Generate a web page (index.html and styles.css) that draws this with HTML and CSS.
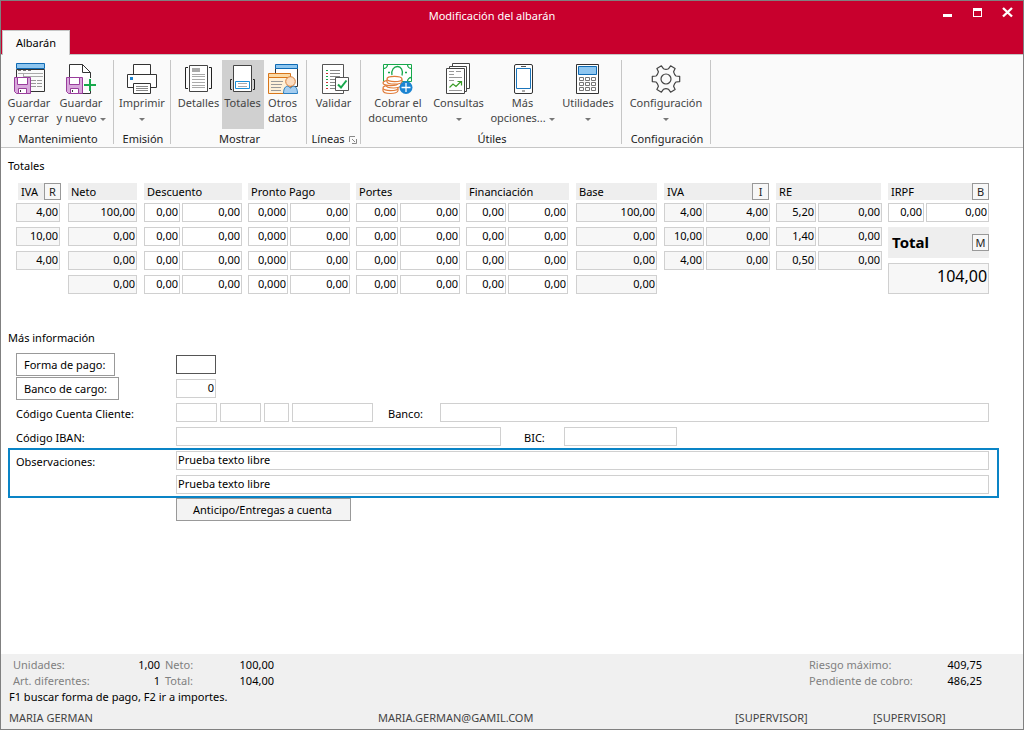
FILE: index.html
```html
<!DOCTYPE html>
<html lang="es">
<head>
<meta charset="utf-8">
<title>Modificación del albarán</title>
<link rel="stylesheet" href="styles.css">
</head>
<body>
<div class="window">
  <header class="top">
    <div class="titlebar">
      <h1 class="title">Modificación del albarán</h1>
      <div class="controls">
        <button class="control" aria-label="Minimizar"><svg width="12" height="12" viewBox="0 0 12 12"><rect x="1" y="7" width="9" height="3" fill="#fff"/></svg></button>
        <button class="control" aria-label="Maximizar"><svg width="12" height="12" viewBox="0 0 12 12"><path d="M1 1h9v9H1zM2 4v5h7V4z" fill="#fff" fill-rule="evenodd"/></svg></button>
        <button class="control" aria-label="Cerrar"><svg width="12" height="12" viewBox="0 0 12 12"><path d="M1 1L10 9.500M10 1L1 9.500" stroke="#fff" stroke-width="2.400"/></svg></button>
      </div>
    </div>
    <nav class="tabs"><button class="tab">Albarán</button></nav>
  </header>

  <div class="ribbon">
    <section class="group g-mant">
      <div class="tools">
        <button class="tool w-50">
          <svg class="icon" viewBox="0 0 34 34">
            <path d="M4.500 7.500H32.500V29.500H4.500z" fill="#fafafa" stroke="#333"/>
            <path d="M4.500 1.500H32.500V6.500H4.500z" fill="#8ec6f0" stroke="#0f6ab4"/>
            <path d="M6 8.500h3m2 0h3m2 0h3" stroke="#777"/><path d="M6 11.500h25M11.500 11v4M11 14.500h20" stroke="#aaa"/>
            <path d="M19 18.500h12M19 21.500h12M19 24.500h12" stroke="#999" stroke-dasharray="5 1"/>
            <g id="floppy"><path d="M2.500 15.500H18.500V31.500H4.500L2.500 29.500z" fill="#d9a9dc" stroke="#993d9c"/><path d="M5.500 15.500H15.500V22.500H5.500z" fill="#fff" stroke="#993d9c"/><path d="M6.500 26.500H14.500V31.500H6.500z" fill="#fff" stroke="#993d9c"/><path d="M8.500 28v2" stroke="#333"/></g>
          </svg>
          <span>Guardar</span><span>y cerrar</span>
        </button>
        <button class="tool w-54">
          <svg class="icon" viewBox="0 0 34 34">
            <path d="M5.500 2.500H18.500L26.500 10.500V31.500H5.500z" fill="#fff" stroke="#333"/>
            <path d="M18.500 2.500V10.500H26.500" fill="none" stroke="#333"/>
            <path d="M20 16h14v12H20z" fill="#fafafa"/>
            <use href="#floppy"/>
            <path d="M26 17v12M20 23h12" stroke="#17a84b" stroke-width="2"/>
          </svg>
          <span>Guardar</span><span>y nuevo <i class="arrow"></i></span>
        </button>
      </div>
      <h2 class="caption">Mantenimiento</h2>
    </section>

    <section class="group g-emi">
      <div class="tools">
        <button class="tool w-50">
          <svg class="icon" viewBox="0 0 34 34">
            <g fill="#fff" stroke="#333"><path d="M8.500 2.500h17v10h-17z"/><path d="M2.500 12.500h29v13h-29z"/><path d="M8.500 21.500h17v10h-17z"/></g>
            <path d="M5 15h3v3H5z" fill="#1b84d2"/><path d="M11 24.500h12M11 26.500h12M11 28.500h12" stroke="#888"/>
          </svg>
          <span>Imprimir</span><span><i class="arrow"></i></span>
        </button>
      </div>
      <h2 class="caption">Emisión</h2>
    </section>

    <section class="group g-mos">
      <div class="tools">
        <button class="tool w-46">
          <svg class="icon" viewBox="0 0 34 34">
            <path d="M7.500 3.500h18v26h-18z" fill="#fff" stroke="#444"/>
            <path d="M6 5.500H3.500v21H6M27 5.500h2.500v21H27" fill="none" stroke="#222"/>
            <path d="M10 6h8v4h-8z" fill="#aaa"/><path d="M10 12.500h13M10 14.500h13M10 17.500h13M10 20.500h13M10 23.500h13M10 25.500h13" stroke="#aaa"/>
          </svg>
          <span>Detalles</span>
        </button>
        <button class="tool w-42 active" aria-pressed="true">
          <svg class="icon" viewBox="0 0 34 34">
            <path d="M7.500 3.500h18v26h-18z" fill="#fff" stroke="#444"/>
            <path d="M6 17.500H4.500v10H6M27 17.500h1.500v10H27" fill="none" stroke="#222"/>
            <path d="M9.500 19.500h14v7h-14z" fill="#fff" stroke="#1b8fd8"/><path d="M12 21.500h9M12 24.500h9" stroke="#aaa"/>
          </svg>
          <span>Totales</span>
        </button>
        <button class="tool w-38">
          <svg class="icon" viewBox="0 0 34 34">
            <path d="M9.500 6.500h22v18h-22z" fill="#fff" stroke="#333"/><path d="M9.500 2.500h22v4h-22z" fill="#8ec6f0" stroke="#0f6ab4"/>
            <path d="M2.500 15.500h22v16h-22z" fill="#fef0d8" stroke="#d8761a"/><path d="M2.500 11.500h22v4h-22z" fill="#fbd9a5" stroke="#d8761a"/>
            <path d="M5 19.500h12M5 22.500h11M5 25.500h10M5 28.500h10" stroke="#999"/>
            <path d="M17.500 31.500c0-5 2-7.500 4.500-7.500l2.500 2 2.500-2c3 0 4.500 3 4.500 7.500z" fill="#a4cdf0" stroke="#2b7fc0"/>
            <circle cx="24.500" cy="19.500" r="4.800" fill="#fbdcc0" stroke="#d8803c"/>
          </svg>
          <span>Otros</span><span>datos</span>
        </button>
      </div>
      <h2 class="caption">Mostrar</h2>
    </section>

    <section class="group g-lin">
      <div class="tools">
        <button class="tool w-50">
          <svg class="icon" viewBox="0 0 34 34">
            <path d="M5.500 2.500h21v29h-21z" fill="#fff" stroke="#555"/>
            <path d="M13 8.500h10M13 11.500h10M13 14.500h10M13 17.500h6M13 20.500h6M13 23.500h6M13 26.500h6" stroke="#888"/>
            <path d="M9 8.500h2M9 14.500h2M9 17.500h2M9 23.500h2" stroke="#17a84b"/><path d="M9 11.500h2M9 20.500h2M9 26.500h2" stroke="#c33"/>
            <path d="M18.500 15.500h13v13h-13z" fill="#fff" stroke="#555"/><path d="M21 22.500l3 3 5.500-7" fill="none" stroke="#17a84b" stroke-width="2"/>
          </svg>
          <span>Validar</span>
        </button>
      </div>
      <h2 class="caption">Líneas <svg class="launcher" viewBox="0 0 8 8"><path d="M.5 6V.5H6M3 3l3 3M7.500 3v4.500H3" fill="none" stroke="#888"/></svg></h2>
    </section>

    <section class="group g-uti">
      <div class="tools">
        <button class="tool w-64">
          <svg class="icon" viewBox="0 0 34 34">
            <path d="M2.500 2.500h28v17h-28z" fill="#fff" stroke="#17a84b"/>
            <path d="M2.500 6.500a4 4 0 0 0 4-4M26.500 2.500a4 4 0 0 0 4 4M26.500 19.500a4 4 0 0 1 4-4M11 13c-1-5 2-8.500 5.500-8.500s6 4 4.500 9M7 10.500h2M24 10.500h2" fill="none" stroke="#17a84b" stroke-width="1.300"/>
            <g fill="#fff" stroke="#e07b39" stroke-width="1.200"><path d="M2 26.500v2c0 4 15 4 15 0v-2"/><ellipse cx="9.500" cy="26" rx="7.500" ry="2.700"/><path d="M5 21v2c0 4 15 4 15 0v-2"/><ellipse cx="9.500" cy="21" rx="7.500" ry="2.700"/><path d="M6 17.500v2c0 3.500 15 3.500 15 0v-2"/><ellipse cx="13.500" cy="17" rx="7.500" ry="2.700"/></g>
            <circle cx="25" cy="25.500" r="6.500" fill="#1b84d2"/><path d="M25 21v9M20.500 25.500h9" stroke="#fff" stroke-width="1.300"/>
          </svg>
          <span>Cobrar el</span><span>documento</span>
        </button>
        <button class="tool w-57">
          <svg class="icon" viewBox="0 0 34 34">
            <g fill="#fff" stroke="#444"><path d="M10.500 1.500h17v25h-17z"/><path d="M7.500 4.500h17v25h-17z"/><path d="M4.500 6.500h18v25h-18z"/></g>
            <path d="M7 9.500h5m2 0h5M7 12.500h5M7 15.500h13M7 18.500h5M7 28.500h13" stroke="#999"/>
            <path d="M7.500 25.500l3.500-3.500 3 2.500 5-5M15.500 19.500h4v4" fill="none" stroke="#3a9c28" stroke-width="1.200"/>
          </svg>
          <span>Consultas</span><span><i class="arrow"></i></span>
        </button>
        <button class="tool w-71">
          <svg class="icon" viewBox="0 0 34 34">
            <rect x="8.500" y="2.500" width="18" height="29" rx="1.500" fill="#fff" stroke="#333"/><path d="M10.500 6.500h14v20h-14z" fill="#fff" stroke="#1b75bb"/><path d="M15 4.500h5M16 29h3" stroke="#555"/>
          </svg>
          <span>Más</span><span>opciones... <i class="arrow"></i></span>
        </button>
        <button class="tool w-60">
          <svg class="icon" viewBox="0 0 34 34">
            <path d="M5.500 2.500h22v29h-22z" fill="#fff" stroke="#333"/><path d="M7.500 4.500h18v8h-18z" fill="#8ec6f0" stroke="#0f6ab4"/>
            <path d="M8.500 15.500h4v3h-4zM14.500 15.500h4v3h-4zM20.500 15.500h4v3h-4zM8.500 20.500h4v3h-4zM14.500 20.500h4v3h-4zM20.500 20.500h4v3h-4zM8.500 25.500h4v3h-4zM14.500 25.500h4v3h-4zM20.500 25.500h4v3h-4z" fill="#fff" stroke="#777"/>
          </svg>
          <span>Utilidades</span><span><i class="arrow"></i></span>
        </button>
      </div>
      <h2 class="caption">Útiles</h2>
    </section>

    <section class="group g-conf">
      <div class="tools">
        <button class="tool w-80">
          <svg class="icon" viewBox="-17 -17 34 34">
            <path d="M10 3L13.700 2.600V-2.600L10 -3Q8.500 -4 7.600 -7.200L9.100 -10.600L4.600 -13.200L2.400 -10.200Q0 -9 -2.400 -10.200L-4.600 -13.200L-9.100 -10.600L-7.600 -7.200Q-8.500 -4 -10 -3L-13.700 -2.600V2.600L-10 3Q-8.500 4 -7.600 7.200L-9.100 10.600L-4.600 13.200L-2.400 10.200Q0 9 2.400 10.200L4.600 13.200L9.100 10.600L7.600 7.200Q8.500 4 10 3z" fill="#fafafa" stroke="#444" stroke-width="1.200" stroke-linejoin="round"/><circle r="5" fill="none" stroke="#444" stroke-width="1.200"/>
          </svg>
          <span>Configuración</span><span><i class="arrow"></i></span>
        </button>
      </div>
      <h2 class="caption">Configuración</h2>
    </section>
  </div>

  <main class="content">
    <h2 class="heading">Totales</h2>
    <table class="totals">
      <colgroup>
        <col class="c-52"><col class="c-76"><col class="c-38"><col class="c-66"><col class="c-42"><col class="c-66"><col class="c-44"><col class="c-66"><col class="c-42"><col class="c-68"><col class="c-88"><col class="c-42"><col class="c-70"><col class="c-42"><col class="c-70"><col class="c-38"><col class="c-63">
      </colgroup>
      <thead>
        <tr>
          <th class="end-7 inset"><div class="head">IVA<button class="key">R</button></div></th>
          <th class="end-7"><div class="head">Neto</div></th>
          <th class="end-6" colspan="2"><div class="head">Descuento</div></th>
          <th class="end-6" colspan="2"><div class="head">Pronto Pago</div></th>
          <th class="end-6" colspan="2"><div class="head">Portes</div></th>
          <th class="end-7" colspan="2"><div class="head">Financiación</div></th>
          <th class="end-7"><div class="head">Base</div></th>
          <th class="end-7" colspan="2"><div class="head">IVA<button class="key">I</button></div></th>
          <th class="end-7" colspan="2"><div class="head">RE</div></th>
          <th class="end-0" colspan="2"><div class="head">IRPF<button class="key">B</button></div></th>
        </tr>
      </thead>
      <tbody>
        <tr>
          <td class="end-8"><input class="num" aria-label="IVA 1" value="4,00" readonly></td>
          <td class="end-7"><input class="num" aria-label="Neto 1" value="100,00" readonly></td>
          <td><input class="num" aria-label="Descuento % 1" value="0,00"></td>
          <td class="end-6"><input class="num" aria-label="Descuento 1" value="0,00"></td>
          <td><input class="num" aria-label="Pronto Pago % 1" value="0,000"></td>
          <td class="end-6"><input class="num" aria-label="Pronto Pago 1" value="0,00"></td>
          <td><input class="num" aria-label="Portes % 1" value="0,00"></td>
          <td class="end-6"><input class="num" aria-label="Portes 1" value="0,00"></td>
          <td><input class="num" aria-label="Financiación % 1" value="0,00"></td>
          <td class="end-8"><input class="num" aria-label="Financiación 1" value="0,00"></td>
          <td class="end-7"><input class="num" aria-label="Base 1" value="100,00" readonly></td>
          <td><input class="num" aria-label="IVA % 1" value="4,00" readonly></td>
          <td class="end-6"><input class="num" aria-label="Cuota IVA 1" value="4,00" readonly></td>
          <td><input class="num" aria-label="RE % 1" value="5,20" readonly></td>
          <td class="end-6"><input class="num" aria-label="RE 1" value="0,00" readonly></td>
          <td><input class="num" aria-label="IRPF %" value="0,00"></td>
          <td class="end-0"><input class="num" aria-label="IRPF" value="0,00"></td>
        </tr>
        <tr>
          <td class="end-8"><input class="num" aria-label="IVA 2" value="10,00" readonly></td>
          <td class="end-7"><input class="num" aria-label="Neto 2" value="0,00" readonly></td>
          <td><input class="num" aria-label="Descuento % 2" value="0,00"></td>
          <td class="end-6"><input class="num" aria-label="Descuento 2" value="0,00"></td>
          <td><input class="num" aria-label="Pronto Pago % 2" value="0,000"></td>
          <td class="end-6"><input class="num" aria-label="Pronto Pago 2" value="0,00"></td>
          <td><input class="num" aria-label="Portes % 2" value="0,00"></td>
          <td class="end-6"><input class="num" aria-label="Portes 2" value="0,00"></td>
          <td><input class="num" aria-label="Financiación % 2" value="0,00"></td>
          <td class="end-8"><input class="num" aria-label="Financiación 2" value="0,00"></td>
          <td class="end-7"><input class="num" aria-label="Base 2" value="0,00" readonly></td>
          <td><input class="num" aria-label="IVA % 2" value="10,00" readonly></td>
          <td class="end-6"><input class="num" aria-label="Cuota IVA 2" value="0,00" readonly></td>
          <td><input class="num" aria-label="RE % 2" value="1,40" readonly></td>
          <td class="end-6"><input class="num" aria-label="RE 2" value="0,00" readonly></td>
          <td class="end-0" colspan="2" rowspan="3">
            <div class="total-head"><label for="total">Total</label><button class="key">M</button></div>
            <input class="num total-value" id="total" value="104,00" readonly>
          </td>
        </tr>
        <tr>
          <td class="end-8"><input class="num" aria-label="IVA 3" value="4,00" readonly></td>
          <td class="end-7"><input class="num" aria-label="Neto 3" value="0,00" readonly></td>
          <td><input class="num" aria-label="Descuento % 3" value="0,00"></td>
          <td class="end-6"><input class="num" aria-label="Descuento 3" value="0,00"></td>
          <td><input class="num" aria-label="Pronto Pago % 3" value="0,000"></td>
          <td class="end-6"><input class="num" aria-label="Pronto Pago 3" value="0,00"></td>
          <td><input class="num" aria-label="Portes % 3" value="0,00"></td>
          <td class="end-6"><input class="num" aria-label="Portes 3" value="0,00"></td>
          <td><input class="num" aria-label="Financiación % 3" value="0,00"></td>
          <td class="end-8"><input class="num" aria-label="Financiación 3" value="0,00"></td>
          <td class="end-7"><input class="num" aria-label="Base 3" value="0,00" readonly></td>
          <td><input class="num" aria-label="IVA % 3" value="4,00" readonly></td>
          <td class="end-6"><input class="num" aria-label="Cuota IVA 3" value="0,00" readonly></td>
          <td><input class="num" aria-label="RE % 3" value="0,50" readonly></td>
          <td class="end-6"><input class="num" aria-label="RE 3" value="0,00" readonly></td>
        </tr>
        <tr>
          <td class="end-8"></td>
          <td class="end-7"><input class="num" aria-label="Neto 4" value="0,00" readonly></td>
          <td><input class="num" aria-label="Descuento % 4" value="0,00"></td>
          <td class="end-6"><input class="num" aria-label="Descuento 4" value="0,00"></td>
          <td><input class="num" aria-label="Pronto Pago % 4" value="0,000"></td>
          <td class="end-6"><input class="num" aria-label="Pronto Pago 4" value="0,00"></td>
          <td><input class="num" aria-label="Portes % 4" value="0,00"></td>
          <td class="end-6"><input class="num" aria-label="Portes 4" value="0,00"></td>
          <td><input class="num" aria-label="Financiación % 4" value="0,00"></td>
          <td class="end-8"><input class="num" aria-label="Financiación 4" value="0,00"></td>
          <td class="end-7"><input class="num" aria-label="Base 4" value="0,00" readonly></td>
          <td colspan="4"></td>
        </tr>
      </tbody>
    </table>

    <h2 class="heading">Más información</h2>
    <form class="info">
      <div class="row">
        <div class="name"><button type="button" class="btn">Forma de pago:</button></div>
        <input class="field f-40 focused" aria-label="Forma de pago">
      </div>
      <div class="row">
        <div class="name"><button type="button" class="btn f-103">Banco de cargo:</button></div>
        <input class="field num f-40" aria-label="Banco de cargo" value="0">
      </div>
      <div class="row">
        <label class="name" for="entidad">Código Cuenta Cliente:</label>
        <div class="account">
          <input class="field f-41" id="entidad">
          <input class="field f-41" aria-label="Oficina">
          <input class="field f-25" aria-label="Dígito de control">
          <input class="field f-81" aria-label="Número de cuenta">
        </div>
        <label class="banco" for="banco">Banco:</label>
        <input class="field grow" id="banco">
      </div>
      <div class="row">
        <label class="name" for="iban">Código IBAN:</label>
        <input class="field f-325" id="iban">
        <label class="bic" for="bic">BIC:</label>
        <input class="field f-113" id="bic">
      </div>
      <div class="notes">
        <label class="name" for="obs">Observaciones:</label>
        <div class="lines">
          <input class="field" id="obs" value="Prueba texto libre">
          <input class="field" aria-label="Observaciones, segunda línea" value="Prueba texto libre">
        </div>
      </div>
      <div class="after"><button type="button" class="btn wide">Anticipo/Entregas a cuenta</button></div>
    </form>
  </main>

  <footer class="footer">
    <div class="summary">
      <dl class="figures left">
        <dt>Unidades:</dt><dd>1,00</dd><dt>Neto:</dt><dd>100,00</dd>
        <dt>Art. diferentes:</dt><dd>1</dd><dt>Total:</dt><dd>104,00</dd>
      </dl>
      <dl class="figures right">
        <dt>Riesgo máximo:</dt><dd>409,75</dd>
        <dt>Pendiente de cobro:</dt><dd>486,25</dd>
      </dl>
    </div>
    <p class="hint">F1 buscar forma de pago, F2 ir a importes.</p>
    <div class="status"><span>MARIA GERMAN</span><span>MARIA.GERMAN@GAMIL.COM</span><span>[SUPERVISOR]</span><span>[SUPERVISOR]</span></div>
  </footer>
</div>
</body>
</html>
```

FILE: styles.css
```css
* { box-sizing: border-box; }

body {
  margin: 0;
  font: 11px/15px "Noto Sans", "Open Sans", sans-serif;
  color: #000;
  background: #fff;
}

h1, h2, p, dl, dd { margin: 0; font-size: 11px; font-weight: 400; }
button, input { font: inherit; color: inherit; margin: 0; border-radius: 0; }
button { white-space: nowrap; }

.window {
  display: flex;
  flex-direction: column;
  min-height: 100vh;
  border: 1px solid #808080;
}

/* Title bar and tabs */
.top { background: #c8002d; }
.titlebar {
  display: grid;
  grid-template-columns: 1fr auto 1fr;
  height: 29px;
}
.title { grid-column: 2; padding-right: 40px; color: #fff; font-size: 11px; line-height: 30px; }
.controls { display: flex; justify-content: flex-end; align-items: flex-start; gap: 18px; padding: 6px 9px 0 0; }
.control { width: 12px; height: 12px; padding: 0; border: 0; background: none; }
.control svg { display: block; }
.tabs { display: flex; height: 25px; padding-left: 1px; border-bottom: 1px solid #c6c6c6; }
.tab {
  width: 68px;
  height: 25px;
  padding: 0 0 2px;
  border: 1px solid #c6c6c6;
  border-bottom: 0;
  background: #fafafa;
}

/* Ribbon */
.ribbon {
  display: flex;
  height: 93px;
  padding-top: 5px;
  background: #fafafa;
  border-bottom: 1px solid #c6c6c6;
}
.group {
  display: flex;
  flex-direction: column;
  flex: none;
  height: 84px;
  border-right: 1px solid #c6c6c6;
}
.g-mant { width: 113px; }
.g-emi { width: 57px; }
.g-mos { width: 136px; }
.g-lin { width: 54px; }
.g-uti { width: 261px; }
.g-conf { width: 89px; }
.tools { display: flex; justify-content: center; }
.g-mant .tools { padding-right: 2px; }
.g-uti .tools { padding-left: 2px; }
.tool {
  display: flex;
  flex-direction: column;
  align-items: center;
  flex: none;
  height: 69px;
  padding: 2px 0 0;
  border: 0;
  background: none;
  color: #444;
}
.tool span { height: 15px; }
.active { background: #d0d0d0; }
.icon { display: block; width: 34px; height: 34px; margin-bottom: -1px; }
.w-38 { width: 38px; }
.w-42 { width: 42px; }
.w-46 { width: 46px; }
.w-50 { width: 50px; }
.w-54 { width: 54px; }
.w-57 { width: 57px; }
.w-60 { width: 60px; }
.w-64 { width: 64px; }
.w-71 { width: 71px; }
.w-80 { width: 80px; }
.arrow {
  display: inline-block;
  vertical-align: 1px;
  border: 3px solid transparent;
  border-top-color: #777;
  border-bottom: 0;
}
.caption { padding: 2px 0 0 2px; text-align: center; color: #222; }
.launcher { width: 8px; height: 8px; margin-left: 2px; vertical-align: -1px; }

/* Main area */
.content { flex: 1; padding: 10px 24px 0 7px; }
.heading { line-height: 16px; }

.totals {
  table-layout: fixed;
  width: calc(100% - 18px);
  margin: 9px 10px 31px 8px;
  border-spacing: 0;
}
.totals th, .totals td { padding: 0 2px 5px 0; vertical-align: top; text-align: left; font-weight: 400; }
.totals th { padding-bottom: 3px; }
.totals .inset { padding-left: 2px; }
.totals .end-0 { padding-right: 0; }
.totals .end-6 { padding-right: 6px; }
.totals .end-7 { padding-right: 7px; }
.totals .end-8 { padding-right: 8px; }
.c-38 { width: 38px; }
.c-42 { width: 42px; }
.c-44 { width: 44px; }
.c-52 { width: 52px; }
.c-63 { width: 63px; }
.c-66 { width: 66px; }
.c-68 { width: 68px; }
.c-70 { width: 70px; }
.c-76 { width: 76px; }
.c-88 { width: 88px; }

.head, .total-head {
  display: flex;
  align-items: center;
  justify-content: space-between;
  background: #eee;
}
.head { height: 17px; padding-left: 3px; }
.total-head { height: 31px; margin-bottom: 5px; padding-left: 4px; font-size: 15px; font-weight: 700; }
.key {
  width: 17px;
  height: 17px;
  padding: 0;
  border: 1px solid #999;
  background: #f7f7f7;
  color: #222;
  font-size: 11px;
  font-weight: 400;
  line-height: 14px;
}

.num, .field {
  display: block;
  width: 100%;
  height: 19px;
  padding: 0 1px 2px;
  border: 1px solid #d0d0d0;
  background: #fff;
  outline: 0;
}
.num { text-align: right; }
.num:read-only { background: #f7f7f7; }
.total-value { height: 31px; padding-bottom: 5px; font-size: 16px; }

/* Details form */
.heading + .info { padding-top: 7px; }
.row { display: flex; align-items: center; height: 23px; margin: 0 10px 1px 8px; }
.row:nth-child(4) { margin-bottom: 0; }
.row label { padding-top: 2px; }
.name { flex: none; width: 160px; }
.btn {
  display: block;
  height: 23px;
  padding: 0 9px 0 7px;
  border: 1px solid #999;
  background: #fff;
  text-align: left;
}
.wide { width: 175px; background: #f3f3f3; text-align: center; }
.field { flex: none; }
.focused { border-color: #555; }
.account { display: flex; gap: 3px; }
.f-25 { width: 25px; }
.f-40 { width: 40px; }
.f-41 { width: 41px; }
.f-81 { width: 81px; }
.f-103 { width: 103px; }
.f-113 { width: 113px; }
.f-325 { width: 325px; }
.grow { flex: 1; }
.banco { width: 52px; margin-left: 15px; }
.bic { width: 40px; margin-left: 23px; }
.notes {
  display: flex;
  padding: 1px 8px 2px 6px;
  border: 2px solid #0a84c6;
}
.notes .name { line-height: 22px; }
.lines { display: flex; flex-direction: column; flex: 1; gap: 5px; }
.after { padding-left: 168px; }

/* Footer */
.footer { padding: 3px 0 3px 8px; background: #f0f0f0; line-height: 16px; }
.summary { display: flex; justify-content: space-between; padding: 0 41px 0 4px; }
.figures { display: grid; }
.left { grid-template-columns: 100px 47px 61px 53px; }
.right { grid-template-columns: 120px 53px; }
.figures dt { color: #808080; }
.left dt:nth-of-type(even) { padding-left: 5px; }
.figures dd { text-align: right; }
.status {
  display: grid;
  grid-template-columns: 369fr 357fr 138fr 150fr;
  padding-top: 5px;
  color: #444;
}
```
